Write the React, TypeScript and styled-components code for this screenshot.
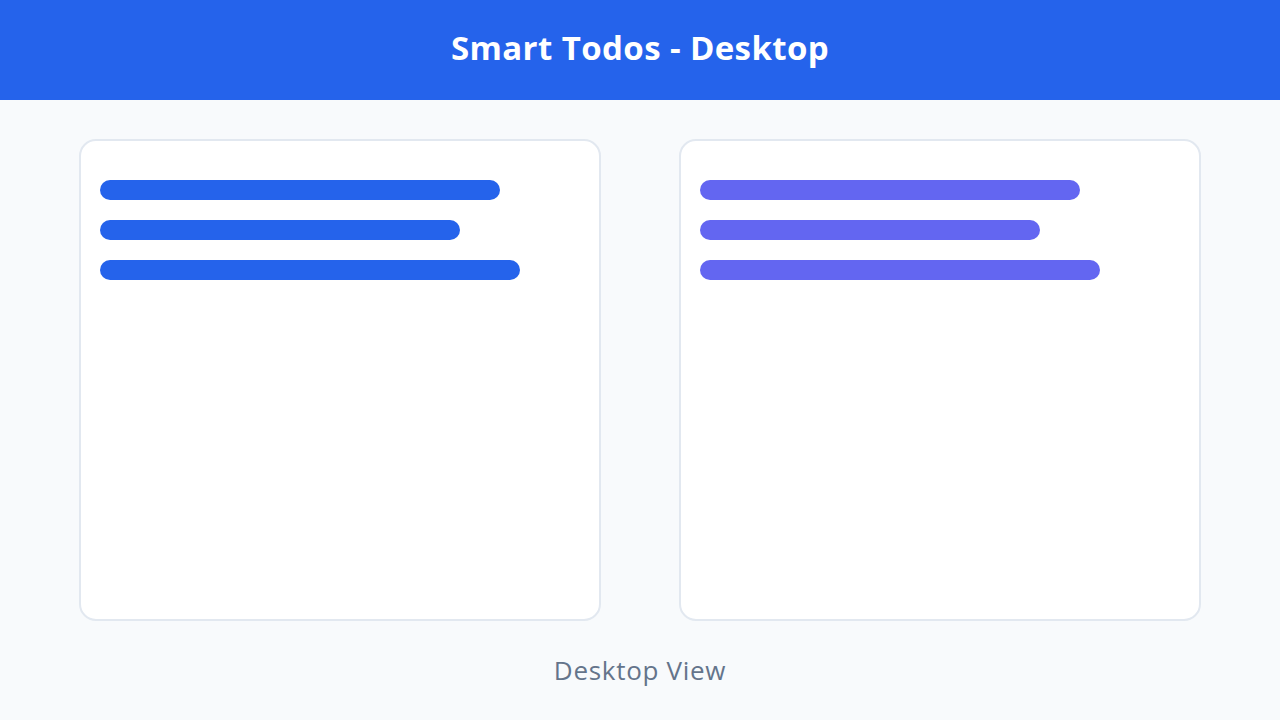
import styled, { createGlobalStyle } from "styled-components";

const GlobalStyle = createGlobalStyle`
  * {
    box-sizing: border-box;
  }
  body {
    margin: 0;
    background-color: #f8fafc;
    font-family: "Open Sans", "Lato", sans-serif;
  }
`;

const Page = styled.div`
  width: 1280px;
  height: 720px;
  display: flex;
  flex-direction: column;
  background-color: #f8fafc;
`;

const Header = styled.header`
  height: 100px;
  background-color: #2563eb;
  display: flex;
  align-items: center;
  justify-content: center;
  padding-bottom: 4px;
`;

const Title = styled.h1`
  margin: 0;
  color: white;
  font-size: 33px;
  font-weight: 700;
  line-height: 1.2;
  letter-spacing: 0.4px;
`;

const Panels = styled.main`
  display: grid;
  grid-template-columns: 522px 522px;
  gap: 78px;
  justify-content: center;
  padding-top: 39px;
`;

const Card = styled.section`
  height: 482px;
  background-color: white;
  border: 2px solid #e2e8f0;
  border-radius: 17px;
  padding: 39px 19px;
  display: flex;
  flex-direction: column;
  gap: 20px;
`;

const Bar = styled.div<{ $width: number; $color: string }>`
  width: ${(p) => p.$width}px;
  height: 20px;
  border-radius: 10px;
  background-color: ${(p) => p.$color};
`;

const Footer = styled.p`
  margin: 0;
  flex: 1;
  display: flex;
  align-items: center;
  justify-content: center;
  padding-bottom: 2px;
  color: #64748b;
  font-size: 26px;
  letter-spacing: 0.7px;
`;

const BLUE = "#2563eb";
const INDIGO = "#6366f1";

export default function App() {
  return (
    <>
      <GlobalStyle />
      <Page>
        <Header>
          <Title>Smart Todos - Desktop</Title>
        </Header>
        <Panels>
          <Card>
            <Bar $width={400} $color={BLUE} />
            <Bar $width={360} $color={BLUE} />
            <Bar $width={420} $color={BLUE} />
          </Card>
          <Card>
            <Bar $width={380} $color={INDIGO} />
            <Bar $width={340} $color={INDIGO} />
            <Bar $width={400} $color={INDIGO} />
          </Card>
        </Panels>
        <Footer>Desktop View</Footer>
      </Page>
    </>
  );
}
